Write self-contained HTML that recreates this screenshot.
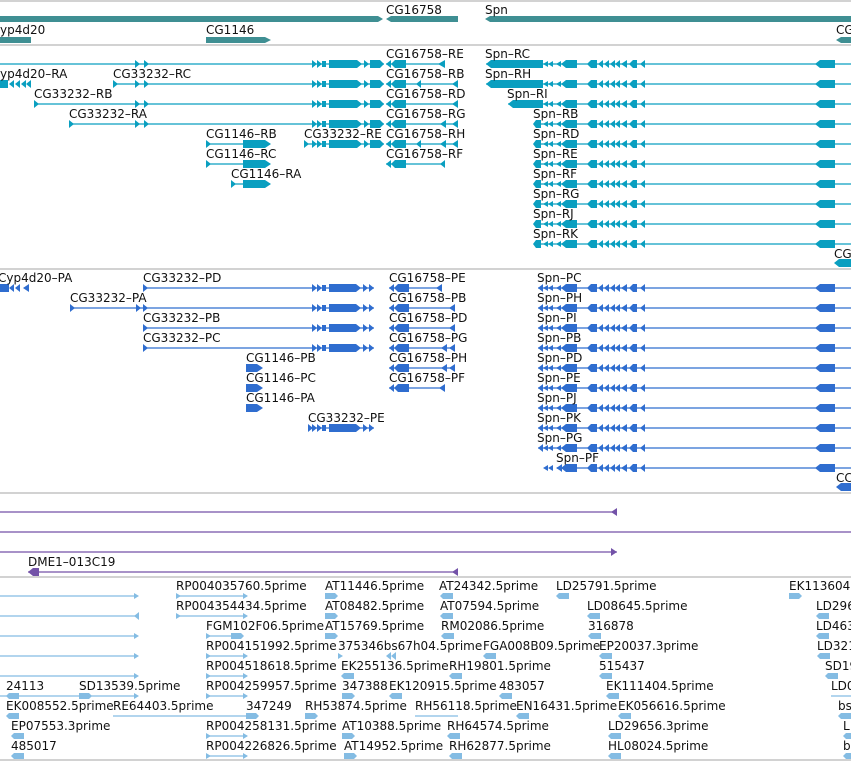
<!DOCTYPE html>
<html><head><meta charset="utf-8"><style>
html,body{margin:0;padding:0;background:#fff;}
svg{display:block;}
text{font-family:"DejaVu Sans","Liberation Sans",sans-serif;font-size:12px;fill:#111;}
</style></head><body>
<svg width="851" height="761" viewBox="0 0 851 761" xmlns="http://www.w3.org/2000/svg">
<defs>
<g id="spnx">
<polygon points="543,0 548,-3 548,3"/><polygon points="548,0 553,-3 553,3"/>
<polygon points="556,0 561,-3 561,3"/>
<polygon points="561,0 566,-4 577,-4 577,4 566,4"/>
<polygon points="587,0 591,-4 597,-4 597,4 591,4"/>
<polygon points="598,0 603,-4 603,4"/><polygon points="604,0 609,-4 609,4"/>
<polygon points="610,0 615,-4 615,4"/><polygon points="615,0 620,-4 620,4"/>
<polygon points="621,0 627,-4 627,4"/>
<polygon points="629,0 633,-4 637,-4 637,4 633,4"/>
<polygon points="640,0 645,-4 645,4"/>
<polygon points="815,0 820,-4 835,-4 835,4 820,4"/>
</g>
<polygon id="spns" points="533,0 536,-4 541,-4 541,4 536,4"/>
<g id="c33x">
<polygon points="312,-4 317,0 312,4"/><polygon points="317,-4 322,0 317,4"/>
<rect x="322" y="-3" width="4" height="6"/>
<polygon points="329,-4 357,-4 362,0 357,4 329,4"/>
<polygon points="364,-4 369,0 364,4"/>
<polygon points="370,-4 380,-4 384,0 380,4 370,4"/>
</g>
<g id="c33p">
<polygon points="312,-4 317,0 312,4"/><polygon points="317,-4 322,0 317,4"/>
<rect x="322" y="-3" width="4" height="6"/>
<polygon points="329,-4 356,-4 361,0 356,4 329,4"/>
<polygon points="363,-4 368,0 363,4"/><polygon points="369,-4 374,0 369,4"/>
</g>
<g id="c16x">
<polygon points="386,0 391,-4 391,4"/>
<polygon points="391,0 395,-4 406,-4 406,4 395,4"/>
</g>
<polygon id="est" points="0,-3 10,-3 13,0 10,3 0,3"/>
<polygon id="estl" points="0,0 3,-3 13,-3 13,3 3,3"/>
</defs>

<g stroke="#c4c4c4" stroke-width="1.5">
<line x1="0" y1="1" x2="851" y2="1"/><line x1="0" y1="45" x2="851" y2="45"/>
<line x1="0" y1="269" x2="851" y2="269"/><line x1="0" y1="493" x2="851" y2="493"/>
<line x1="0" y1="577" x2="851" y2="577"/><line x1="0" y1="760" x2="851" y2="760"/>
</g>

<g fill="#3f8f93">
<polygon points="0,16 378,16 383,19 378,22 0,22"/>
<polygon points="386,19 391,16 458,16 458,22 391,22"/>
<polygon points="485,19 490,16 851,16 851,22 490,22"/>
<rect x="0" y="37" width="31" height="6"/>
<polygon points="206,37 265,37 271,40 265,43 206,43"/>
<polygon points="836,40 841,37 851,37 851,43 841,43"/>
</g>
<text x="386" y="14">CG16758</text><text x="485" y="14">Spn</text>
<text x="0" y="34">yp4d20</text><text x="206" y="34">CG1146</text><text x="836" y="34">CG</text>

<g fill="#0a9fc0" stroke="none">
<g stroke="#0a9fc0" stroke-width="1.2">
<line x1="0" y1="64" x2="384" y2="64"/>
<line x1="113" y1="84" x2="384" y2="84"/>
<line x1="34" y1="104" x2="384" y2="104"/>
<line x1="69" y1="124" x2="384" y2="124"/>
<line x1="206" y1="144" x2="270" y2="144"/>
<line x1="206" y1="164" x2="270" y2="164"/>
<line x1="231" y1="184" x2="270" y2="184"/>
<line x1="304" y1="144" x2="384" y2="144"/>
<line x1="386" y1="64" x2="445" y2="64"/><line x1="386" y1="84" x2="458" y2="84"/>
<line x1="386" y1="104" x2="458" y2="104"/><line x1="386" y1="124" x2="458" y2="124"/>
<line x1="386" y1="144" x2="458" y2="144"/><line x1="386" y1="164" x2="445" y2="164"/>
<line x1="486" y1="64" x2="851" y2="64"/><line x1="486" y1="84" x2="851" y2="84"/>
<line x1="508" y1="104" x2="851" y2="104"/>
<line x1="534" y1="124" x2="851" y2="124"/><line x1="534" y1="144" x2="851" y2="144"/>
<line x1="534" y1="164" x2="851" y2="164"/><line x1="534" y1="184" x2="851" y2="184"/>
<line x1="534" y1="204" x2="851" y2="204"/><line x1="534" y1="224" x2="851" y2="224"/>
<line x1="534" y1="244" x2="851" y2="244"/>
</g>
<polygon points="113,80 118,84 113,88"/><polygon points="34,100 39,104 34,108"/><polygon points="69,120 74,124 69,128"/>
<polygon points="304,140 309,144 304,148"/>
<g id="c33arr"><polygon points="135,60 140,64 135,68"/><polygon points="144,60 149,64 144,68"/></g>
<use href="#c33arr" y="20"/><use href="#c33arr" y="40"/><use href="#c33arr" y="60"/>
<use href="#c33x" y="64"/><use href="#c33x" y="84"/><use href="#c33x" y="104"/><use href="#c33x" y="124"/><use href="#c33x" y="144"/>
<rect x="0" y="80" width="8" height="8"/><polygon points="9,84 14,80 14,88"/><polygon points="15,84 20,80 20,88"/><polygon points="21,84 26,80 26,88"/><polygon points="26,84 31,80 31,88"/>
<polygon points="206,140 211,144 206,148"/><polygon points="206,160 211,164 206,168"/><polygon points="231,180 236,184 231,188"/>
<polygon points="243,140 265,140 271,144 265,148 243,148"/>
<polygon points="243,160 265,160 271,164 265,168 243,168"/>
<polygon points="243,180 265,180 271,184 265,188 243,188"/>
<use href="#c16x" y="64"/><use href="#c16x" y="84"/><use href="#c16x" y="104"/><use href="#c16x" y="124"/><use href="#c16x" y="144"/><use href="#c16x" y="164"/>
<polygon points="438,64 445,60 445,68"/><polygon points="452,84 458,80 458,88"/><polygon points="452,104 458,100 458,108"/>
<polygon points="416,84 421,80 421,88"/>
<polygon points="440,124 446,120 446,128"/><polygon points="452,124 458,120 458,128"/>
<polygon points="416,144 421,140 421,148"/><polygon points="440,144 446,140 446,148"/><polygon points="452,144 458,140 458,148"/>
<polygon points="440,164 445,160 445,168"/>
<polygon points="486,64 491,60 543,60 543,68 491,68"/>
<polygon points="486,84 491,80 543,80 543,88 491,88"/>
<polygon points="508,104 513,100 543,100 543,108 513,108"/>
<use href="#spnx" y="64"/><use href="#spnx" y="84"/><use href="#spnx" y="104"/>
<use href="#spnx" y="124"/><use href="#spnx" y="144"/><use href="#spnx" y="164"/><use href="#spnx" y="184"/><use href="#spnx" y="204"/><use href="#spnx" y="224"/><use href="#spnx" y="244"/>
<use href="#spns" y="124"/><use href="#spns" y="144"/><use href="#spns" y="164"/><use href="#spns" y="184"/><use href="#spns" y="204"/><use href="#spns" y="224"/><use href="#spns" y="244"/>
<polygon points="834,263 839,259 851,259 851,267 839,267"/>
</g>
<text x="386" y="58">CG16758–RE</text><text x="485" y="58">Spn–RC</text>
<text x="0" y="78">yp4d20–RA</text><text x="113" y="78">CG33232–RC</text><text x="386" y="78">CG16758–RB</text><text x="485" y="78">Spn–RH</text>
<text x="34" y="98">CG33232–RB</text><text x="386" y="98">CG16758–RD</text><text x="507" y="98">Spn–RI</text>
<text x="69" y="118">CG33232–RA</text><text x="386" y="118">CG16758–RG</text><text x="533" y="118">Spn–RB</text>
<text x="206" y="138">CG1146–RB</text><text x="304" y="138">CG33232–RE</text><text x="386" y="138">CG16758–RH</text><text x="533" y="138">Spn–RD</text>
<text x="206" y="158">CG1146–RC</text><text x="386" y="158">CG16758–RF</text><text x="533" y="158">Spn–RE</text>
<text x="231" y="178">CG1146–RA</text><text x="533" y="178">Spn–RF</text>
<text x="533" y="198">Spn–RG</text><text x="533" y="218">Spn–RJ</text><text x="533" y="238">Spn–RK</text>
<text x="834" y="258">CG</text>

<g fill="#2f6dcf">
<g stroke="#2f6dcf" stroke-width="1.2">
<line x1="143" y1="288" x2="374" y2="288"/><line x1="70" y1="308" x2="143" y2="308"/>
<line x1="143" y1="308" x2="374" y2="308"/><line x1="143" y1="328" x2="374" y2="328"/>
<line x1="143" y1="348" x2="374" y2="348"/><line x1="308" y1="428" x2="374" y2="428"/>
<line x1="389" y1="288" x2="442" y2="288"/><line x1="389" y1="308" x2="455" y2="308"/>
<line x1="389" y1="328" x2="455" y2="328"/><line x1="389" y1="348" x2="455" y2="348"/>
<line x1="389" y1="368" x2="455" y2="368"/><line x1="389" y1="388" x2="445" y2="388"/>
<line x1="538" y1="288" x2="851" y2="288"/><line x1="538" y1="308" x2="851" y2="308"/>
<line x1="538" y1="328" x2="851" y2="328"/><line x1="538" y1="348" x2="851" y2="348"/>
<line x1="538" y1="368" x2="851" y2="368"/><line x1="538" y1="388" x2="851" y2="388"/>
<line x1="538" y1="408" x2="851" y2="408"/><line x1="538" y1="428" x2="851" y2="428"/>
<line x1="538" y1="448" x2="851" y2="448"/><line x1="557" y1="468" x2="851" y2="468"/>
</g>
<rect x="0" y="284" width="9" height="8"/><polygon points="9,288 14,284 14,292"/><polygon points="15,288 20,284 20,292"/><polygon points="23,288 29,284 29,292"/>
<polygon points="143,284 148,288 143,292"/><polygon points="70,304 75,308 70,312"/><polygon points="136,304 141,308 136,312"/>
<polygon points="143,304 148,308 143,312"/><polygon points="143,324 148,328 143,332"/><polygon points="143,344 148,348 143,352"/>
<use href="#c33p" y="288"/><use href="#c33p" y="308"/><use href="#c33p" y="328"/><use href="#c33p" y="348"/>
<polygon points="308,424 313,428 308,432"/><use href="#c33p" y="428"/>
<polygon points="246,364 257,364 263,368 257,372 246,372"/>
<polygon points="246,384 257,384 263,388 257,392 246,392"/>
<polygon points="246,404 257,404 263,408 257,412 246,412"/>
<g transform="translate(3,0)">
<use href="#c16x" y="288"/><use href="#c16x" y="308"/><use href="#c16x" y="328"/><use href="#c16x" y="348"/><use href="#c16x" y="368"/><use href="#c16x" y="388"/>
</g>
<polygon points="436,288 442,284 442,292"/><polygon points="449,308 455,304 455,312"/><polygon points="449,328 455,324 455,332"/>
<polygon points="441,348 447,344 447,352"/><polygon points="449,348 455,344 455,352"/>
<polygon points="441,368 447,364 447,372"/><polygon points="449,368 455,364 455,372"/>
<polygon points="439,388 445,384 445,392"/>
<use href="#spnx" y="288"/><use href="#spnx" y="308"/><use href="#spnx" y="328"/><use href="#spnx" y="348"/><use href="#spnx" y="368"/><use href="#spnx" y="388"/><use href="#spnx" y="408"/><use href="#spnx" y="428"/><use href="#spnx" y="448"/><use href="#spnx" y="468"/>
<polygon points="538,288 543,284 543,292"/><polygon points="538,308 543,304 543,312"/><polygon points="538,328 543,324 543,332"/><polygon points="538,348 543,344 543,352"/><polygon points="538,368 543,364 543,372"/><polygon points="538,388 543,384 543,392"/><polygon points="538,408 543,404 543,412"/><polygon points="538,428 543,424 543,432"/><polygon points="538,448 543,444 543,452"/>
<polygon points="557,468 562,464 562,472"/>
<polygon points="836,487 841,483 851,483 851,491 841,491"/>
</g>
<text x="-2" y="282">Cyp4d20–PA</text><text x="143" y="282">CG33232–PD</text><text x="389" y="282">CG16758–PE</text><text x="537" y="282">Spn–PC</text>
<text x="70" y="302">CG33232–PA</text><text x="389" y="302">CG16758–PB</text><text x="537" y="302">Spn–PH</text>
<text x="143" y="322">CG33232–PB</text><text x="389" y="322">CG16758–PD</text><text x="537" y="322">Spn–PI</text>
<text x="143" y="342">CG33232–PC</text><text x="389" y="342">CG16758–PG</text><text x="537" y="342">Spn–PB</text>
<text x="246" y="362">CG1146–PB</text><text x="389" y="362">CG16758–PH</text><text x="537" y="362">Spn–PD</text>
<text x="246" y="382">CG1146–PC</text><text x="389" y="382">CG16758–PF</text><text x="537" y="382">Spn–PE</text>
<text x="246" y="402">CG1146–PA</text><text x="537" y="402">Spn–PJ</text>
<text x="308" y="422">CG33232–PE</text><text x="537" y="422">Spn–PK</text>
<text x="537" y="442">Spn–PG</text><text x="556" y="462">Spn–PF</text>
<text x="836" y="482">CC</text>

<g fill="#7352a8">
<g stroke="#7352a8" stroke-width="1.2">
<line x1="0" y1="512" x2="617" y2="512"/><line x1="0" y1="532" x2="851" y2="532"/>
<line x1="0" y1="552" x2="617" y2="552"/><line x1="28" y1="572" x2="458" y2="572"/>
</g>
<polygon points="611,512 617,508 617,516"/>
<polygon points="611,548 617,552 611,556"/>
<polygon points="28,572 33,568 39,568 39,576 33,576"/>
<polygon points="452,572 458,568 458,576"/>
</g>
<text x="28" y="566">DME1–013C19</text>

<g fill="#84bce3">
<g stroke="#84bce3" stroke-width="1.2">
<line x1="0" y1="596" x2="137" y2="596"/><line x1="0" y1="616" x2="137" y2="616"/>
<line x1="0" y1="636" x2="137" y2="636"/><line x1="0" y1="656" x2="137" y2="656"/>
<line x1="0" y1="676" x2="137" y2="676"/><line x1="0" y1="696" x2="137" y2="696"/>
<line x1="176" y1="596" x2="247" y2="596"/><line x1="176" y1="616" x2="247" y2="616"/>
<line x1="206" y1="636" x2="240" y2="636"/><line x1="206" y1="656" x2="247" y2="656"/>
<line x1="206" y1="676" x2="247" y2="676"/><line x1="206" y1="696" x2="247" y2="696"/>
<line x1="113" y1="716" x2="250" y2="716"/><line x1="206" y1="736" x2="247" y2="736"/>
<line x1="206" y1="756" x2="247" y2="756"/><line x1="415" y1="716" x2="458" y2="716"/>
<line x1="831" y1="696" x2="851" y2="696"/>
</g>
<polygon points="134,593 139,596 134,599"/><polygon points="134,616 139,612 139,620"/><polygon points="134,633 139,636 134,639"/>
<polygon points="134,653 139,656 134,659"/><polygon points="134,673 139,676 134,679"/><polygon points="134,693 139,696 134,699"/>
<g id="rp"><polygon points="176,593 181,596 176,599"/><polygon points="243,593 248,596 243,599"/></g>
<use href="#rp" y="20"/>
<polygon points="206,633 211,636 206,639"/><use href="#est" x="231" y="636"/>
<g id="rp2"><polygon points="206,653 211,656 206,659"/><polygon points="243,653 248,656 243,659"/></g>
<use href="#rp2" y="20"/><use href="#rp2" y="40"/><use href="#rp2" y="80"/><use href="#rp2" y="100"/>
<use href="#est" x="325" y="596"/><use href="#est" x="325" y="616"/><use href="#est" x="325" y="636"/>
<polygon points="338,653 343,656 338,659"/><polygon points="386,656 391,652 391,660"/><polygon points="391,656 396,652 396,660"/>
<use href="#estl" x="440" y="596"/><use href="#estl" x="440" y="616"/><use href="#estl" x="441" y="636"/>
<use href="#estl" x="483" y="656"/><use href="#estl" x="449" y="676"/><use href="#estl" x="499" y="696"/>
<use href="#estl" x="556" y="596"/><use href="#estl" x="587" y="616"/><use href="#estl" x="588" y="636"/>
<use href="#estl" x="599" y="656"/><use href="#estl" x="599" y="676"/><use href="#estl" x="606" y="696"/>
<use href="#estl" x="618" y="716"/><use href="#estl" x="608" y="736"/><use href="#estl" x="608" y="756"/>
<use href="#est" x="789" y="596"/><use href="#estl" x="816" y="616"/><use href="#estl" x="816" y="636"/>
<use href="#estl" x="817" y="656"/><use href="#estl" x="825" y="676"/><use href="#estl" x="838" y="716"/>
<use href="#estl" x="843" y="736"/><use href="#estl" x="843" y="756"/>
<use href="#estl" x="341" y="676"/><use href="#est" x="342" y="696"/><use href="#estl" x="389" y="696"/>
<use href="#estl" x="6" y="696"/><use href="#est" x="79" y="696"/><use href="#estl" x="6" y="716"/>
<use href="#est" x="246" y="716"/><use href="#est" x="305" y="716"/><use href="#estl" x="516" y="716"/>
<use href="#estl" x="11" y="736"/><use href="#estl" x="11" y="756"/>
<use href="#est" x="342" y="736"/><use href="#est" x="344" y="756"/>
<use href="#estl" x="447" y="736"/><use href="#estl" x="449" y="756"/>
</g>
<text x="176" y="590">RP004035760.5prime</text><text x="325" y="590">AT11446.5prime</text><text x="439" y="590">AT24342.5prime</text><text x="556" y="590">LD25791.5prime</text><text x="789" y="590">EK113604</text>
<text x="176" y="610">RP004354434.5prime</text><text x="325" y="610">AT08482.5prime</text><text x="440" y="610">AT07594.5prime</text><text x="587" y="610">LD08645.5prime</text><text x="816" y="610">LD296</text>
<text x="206" y="630">FGM102F06.5prime</text><text x="325" y="630">AT15769.5prime</text><text x="441" y="630">RM02086.5prime</text><text x="588" y="630">316878</text><text x="816" y="630">LD463</text>
<text x="206" y="650">RP004151992.5prime</text><text x="338" y="650">375346bs67h04.5prime</text><text x="483" y="650">FGA008B09.5prime</text><text x="599" y="650">EP20037.3prime</text><text x="817" y="650">LD321</text>
<text x="206" y="670">RP004518618.5prime</text><text x="341" y="670">EK255136.5prime</text><text x="449" y="670">RH19801.5prime</text><text x="599" y="670">515437</text><text x="825" y="670">SD19</text>
<text x="6" y="690">24113</text><text x="79" y="690">SD13539.5prime</text><text x="206" y="690">RP004259957.5prime</text><text x="342" y="690">347388</text><text x="389" y="690">EK120915.5prime</text><text x="499" y="690">483057</text><text x="606" y="690">EK111404.5prime</text><text x="831" y="690">LD0</text>
<text x="6" y="710">EK008552.5prime</text><text x="113" y="710">RE64403.5prime</text><text x="246" y="710">347249</text><text x="305" y="710">RH53874.5prime</text><text x="415" y="710">RH56118.5prime</text><text x="516" y="710">EN16431.5prime</text><text x="618" y="710">EK056616.5prime</text><text x="838" y="710">bs</text>
<text x="11" y="730">EP07553.3prime</text><text x="206" y="730">RP004258131.5prime</text><text x="342" y="730">AT10388.5prime</text><text x="447" y="730">RH64574.5prime</text><text x="608" y="730">LD29656.3prime</text><text x="843" y="730">L</text>
<text x="11" y="750">485017</text><text x="206" y="750">RP004226826.5prime</text><text x="344" y="750">AT14952.5prime</text><text x="449" y="750">RH62877.5prime</text><text x="608" y="750">HL08024.5prime</text><text x="843" y="750">b</text>
</svg>
</body></html>
